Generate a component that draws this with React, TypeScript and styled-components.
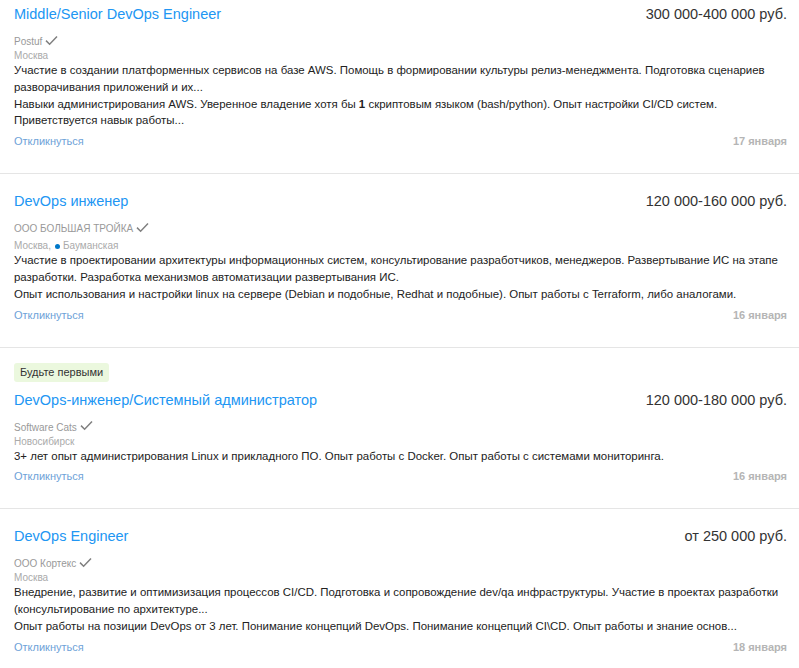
import React from "react";
import styled, { createGlobalStyle } from "styled-components";

const GlobalStyle = createGlobalStyle`
  html, body {
    margin: 0;
    padding: 0;
    background: #fff;
  }
  body {
    font-family: "Liberation Sans", Arial, sans-serif;
    color: #333;
  }
`;

type Vacancy = {
  title: string;
  salary: string;
  company: string;
  city: string;
  metro?: string;
  badge?: string;
  responsibility: React.ReactNode;
  requirement: React.ReactNode;
  date: string;
};

const vacancies: Vacancy[] = [
  {
    title: "Middle/Senior DevOps Engineer",
    salary: "300 000-400 000 руб.",
    company: "Postuf",
    city: "Москва",
    responsibility:
      "Участие в создании платформенных сервисов на базе AWS. Помощь в формировании культуры релиз-менеджмента. Подготовка сценариев разворачивания приложений и их...",
    requirement: (
      <>
        Навыки администрирования AWS. Уверенное владение хотя бы <b>1</b> скриптовым
        языком (bash/python). Опыт настройки CI/CD систем. Приветствуется навык работы...
      </>
    ),
    date: "17 января",
  },
  {
    title: "DevOps инженер",
    salary: "120 000-160 000 руб.",
    company: "ООО БОЛЬШАЯ ТРОЙКА",
    city: "Москва,",
    metro: "Бауманская",
    responsibility:
      "Участие в проектировании архитектуры информационных систем, консультирование разработчиков, менеджеров. Развертывание ИС на этапе разработки. Разработка механизмов автоматизации развертывания ИС.",
    requirement:
      "Опыт использования и настройки linux на сервере (Debian и подобные, Redhat и подобные). Опыт работы с Terraform, либо аналогами.",
    date: "16 января",
  },
  {
    title: "DevOps-инженер/Системный администратор",
    salary: "120 000-180 000 руб.",
    company: "Software Cats",
    city: "Новосибирск",
    badge: "Будьте первыми",
    responsibility:
      "3+ лет опыт администрирования Linux и прикладного ПО. Опыт работы с Docker. Опыт работы с системами мониторинга.",
    requirement: "",
    date: "16 января",
  },
  {
    title: "DevOps Engineer",
    salary: "от 250 000 руб.",
    company: "ООО Кортекс",
    city: "Москва",
    responsibility:
      "Внедрение, развитие и оптимизизация процессов CI/CD. Подготовка и сопровождение dev/qa инфраструктуры. Участие в проектах разработки (консультирование по архитектуре...",
    requirement:
      "Опыт работы на позиции DevOps от 3 лет. Понимание концепций DevOps. Понимание концепций CI\\CD. Опыт работы и знание основ...",
    date: "18 января",
  },
];

// the list is scrolled a little, so the first card starts above the window
const List = styled.div`
  margin-top: -13px;
`;

const Item = styled.div`
  padding: 17px 12px 24px 14px;
  border-bottom: 1px solid #e5e5e5;
`;

const Badge = styled.div`
  width: fit-content;
  background: #ebf8de;
  color: #333;
  font-size: 11px;
  line-height: 19px;
  padding: 0 6px;
  border-radius: 3px;
  margin: -2px 0 8px;
`;

const Header = styled.div`
  display: flex;
  justify-content: space-between;
  align-items: baseline;
`;

const Title = styled.a`
  color: #2196f3;
  font-size: 14.5px;
  line-height: 20px;
  text-decoration: none;
`;

const Salary = styled.div`
  color: #333;
  font-size: 14.5px;
  line-height: 20px;
`;

const Company = styled.div`
  display: flex;
  align-items: center;
  gap: 3px;
  margin-top: 11px;
  color: #999;
  font-size: 10px;
  line-height: 13px;
`;

const Check = styled.svg`
  width: 13px;
  height: 11px;
  margin-top: -3px;
`;

const City = styled.div<{ $metro?: boolean }>`
  display: flex;
  align-items: center;
  gap: 3px;
  margin-top: ${(p) => (p.$metro ? "4px" : "1px")};
  color: #aaa;
  font-size: 10px;
  line-height: 14px;
`;

const MetroDot = styled.span`
  display: inline-block;
  width: 5px;
  height: 5px;
  border-radius: 50%;
  background: #0078c9;
  margin-left: 1px;
`;

const Description = styled.div`
  margin-top: -1px;
  font-size: 11.45px;
  line-height: 16.8px;
  color: #222;

  b {
    font-weight: bold;
  }
`;

const Footer = styled.div`
  display: flex;
  justify-content: space-between;
  align-items: center;
  margin-top: 4px;
  line-height: 16px;
`;

const Respond = styled.a`
  color: #6ea2d8;
  font-size: 11px;
  text-decoration: none;
`;

const DateLabel = styled.span`
  color: #b5b5b5;
  font-size: 11px;
  font-weight: bold;
`;

const CheckIcon = () => (
  <Check viewBox="0 0 13 11">
    <path d="M1 5.6 L4.6 9.2 L12 1.4" fill="none" stroke="#808080" strokeWidth="1.5" />
  </Check>
);

export default function App() {
  return (
    <>
      <GlobalStyle />
      <List>
        {vacancies.map((v) => (
          <Item key={v.title}>
            {v.badge && <Badge>{v.badge}</Badge>}
            <Header>
              <Title href="#">{v.title}</Title>
              <Salary>{v.salary}</Salary>
            </Header>
            <Company>
              {v.company}
              <CheckIcon />
            </Company>
            <City $metro={!!v.metro}>
              {v.city}
              {v.metro && (
                <>
                  <MetroDot />
                  {v.metro}
                </>
              )}
            </City>
            <Description>
              <div>{v.responsibility}</div>
              {v.requirement && <div>{v.requirement}</div>}
            </Description>
            <Footer>
              <Respond href="#">Откликнуться</Respond>
              <DateLabel>{v.date}</DateLabel>
            </Footer>
          </Item>
        ))}
      </List>
    </>
  );
}
